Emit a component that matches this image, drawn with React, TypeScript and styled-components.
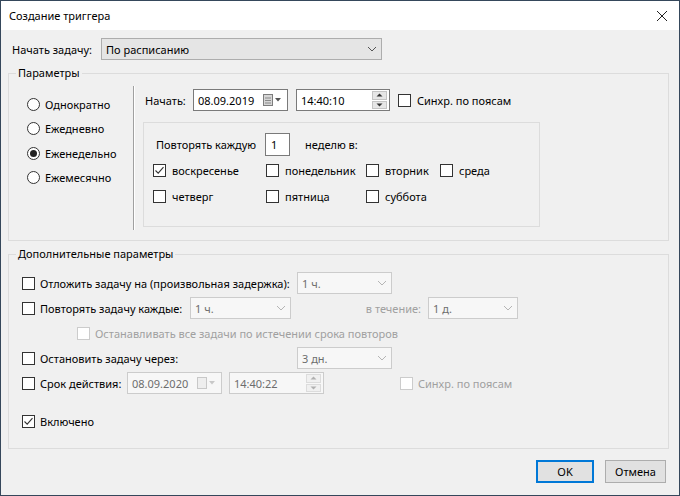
import React from "react";
import styled, { createGlobalStyle } from "styled-components";

const GlobalStyle = createGlobalStyle`
  html, body {
    margin: 0;
    padding: 0;
  }
  body {
    font-family: "Noto Sans", "Open Sans", sans-serif;
    font-size: 11px;
    color: #000;
  }
  * {
    box-sizing: border-box;
  }
`;

const Window = styled.div`
  width: 680px;
  height: 496px;
  border: 1px solid #35475b;
  background: #f0f0f0;
  display: flex;
  flex-direction: column;
`;

const TitleBar = styled.div`
  height: 29px;
  flex-shrink: 0;
  background: #fff;
  display: flex;
  align-items: center;
  justify-content: space-between;
  padding: 0 11px 0 8px;
`;

const Body = styled.div`
  padding: 0 10px 0 7px;
  display: flex;
  flex-direction: column;
`;

const Row = styled.div<{ $height?: number; $pad?: number; $top?: number }>`
  display: flex;
  align-items: center;
  height: ${(p) => p.$height ?? 22}px;
  padding-left: ${(p) => p.$pad ?? 0}px;
  margin-top: ${(p) => p.$top ?? 0}px;
  white-space: nowrap;
`;

const Text = styled.span<{ $width?: number; $gap?: number; $muted?: boolean; $right?: boolean }>`
  display: inline-block;
  width: ${(p) => (p.$width ? `${p.$width}px` : "auto")};
  margin-left: ${(p) => p.$gap ?? 0}px;
  color: ${(p) => (p.$muted ? "#a0a0a0" : "#000")};
  text-align: ${(p) => (p.$right ? "right" : "left")};
  padding-right: ${(p) => (p.$right ? 7 : 0)}px;
  flex-shrink: 0;
`;

const Group = styled.fieldset<{ $top: number }>`
  margin: ${(p) => p.$top}px 0 0 0;
  padding: 0;
  border: 1px solid #dcdcdc;
  min-width: 0;
`;

const Legend = styled.legend`
  margin-left: 7px;
  padding: 0 2px;
  line-height: 16px;
`;

const ParamsLayout = styled.div`
  display: flex;
  height: 159px;
`;

const RadioColumn = styled.div`
  width: 124px;
  padding: 15px 0 0 18px;
  display: flex;
  flex-direction: column;
  gap: 8.5px;
`;

const RadioRow = styled.div`
  display: flex;
  align-items: center;
  height: 16px;
  gap: 5px;
`;

const RadioCircle = styled.span<{ $selected?: boolean }>`
  width: 13px;
  height: 13px;
  border-radius: 50%;
  border: 1px solid #333;
  background: #fff;
  display: inline-flex;
  align-items: center;
  justify-content: center;
  &::after {
    content: "";
    display: ${(p) => (p.$selected ? "block" : "none")};
    width: 7px;
    height: 7px;
    border-radius: 50%;
    background: #222;
  }
`;

const Separator = styled.div`
  margin-top: 5px;
  width: 2px;
  height: 144px;
  border-left: 1px solid #a0a0a0;
  border-right: 1px solid #fff;
`;

const RightPane = styled.div`
  padding: 8px 0 0 10px;
  display: flex;
  flex-direction: column;
`;

const InnerPanel = styled.div`
  margin: 11px 0 0 -2px;
  width: 397px;
  height: 105px;
  border: 1px solid #dcdcdc;
  padding: 10px 0 0 9px;
`;

const NumberBox = styled.div`
  width: 25px;
  height: 23px;
  border: 1px solid #7a7a7a;
  background: #fff;
  padding-left: 5px;
  display: flex;
  align-items: center;
`;

const DaysGrid = styled.div`
  margin-top: 1px;
  display: grid;
  grid-template-columns: 113px 100px 74px auto;
  grid-auto-rows: 26px;
`;

const DayItem = styled.div`
  display: flex;
  align-items: center;
  gap: 6px;
`;

const ExtraLayout = styled.div`
  padding: 9px 0 15px 13px;
  display: flex;
  flex-direction: column;
  gap: 1px;
`;

const Box = styled.span<{ $disabled?: boolean }>`
  width: 13px;
  height: 13px;
  flex-shrink: 0;
  border: 1px solid ${(p) => (p.$disabled ? "#cccccc" : "#333")};
  background: #fff;
  display: inline-flex;
  align-items: center;
  justify-content: center;
`;

const Field = styled.div<{ $width: number; $disabled?: boolean; $gap?: number; $combo?: boolean }>`
  width: ${(p) => p.$width}px;
  height: 22px;
  margin-left: ${(p) => p.$gap ?? 0}px;
  flex-shrink: 0;
  display: flex;
  align-items: center;
  justify-content: space-between;
  padding: 0 3px 0 4px;
  border: 1px solid ${(p) => (p.$disabled ? "#cccccc" : p.$combo ? "#adadad" : "#7a7a7a")};
  background: ${(p) => (p.$disabled ? "#f7f7f7" : p.$combo ? "#e5e5e5" : "#fff")};
  color: ${(p) => (p.$disabled ? "#6d6d6d" : "#000")};
`;

const Spin = styled.div<{ $disabled?: boolean }>`
  width: 15px;
  height: 18px;
  display: flex;
  flex-direction: column;
  gap: 1px;
  margin-right: -1px;
  & > span {
    flex: 1;
    display: flex;
    align-items: center;
    justify-content: center;
    background: ${(p) => (p.$disabled ? "#f0f0f0" : "#e6e6e6")};
    border: 1px solid ${(p) => (p.$disabled ? "#dcdcdc" : "#c4c4c4")};
  }
`;

const ButtonRow = styled.div`
  display: flex;
  justify-content: flex-end;
  gap: 11px;
  margin: 11px 3px 0 0;
`;

const Button = styled.button<{ $width: number; $default?: boolean }>`
  width: ${(p) => p.$width}px;
  height: 23px;
  font: inherit;
  color: #000;
  background: #e1e1e1;
  border: 1px solid ${(p) => (p.$default ? "#0078d7" : "#adadad")};
  box-shadow: ${(p) => (p.$default ? "inset 0 0 0 1px #0078d7" : "none")};
  padding: 0;
`;

const Chevron = ({ color = "#555" }: { color?: string }) => (
  <svg width="12" height="8" viewBox="0 0 12 8">
    <path d="M2 2 L6 6 L10 2" fill="none" stroke={color} strokeWidth="1" />
  </svg>
);

const CalendarIcon = ({ disabled }: { disabled?: boolean }) => (
  <svg width="22" height="12" viewBox="0 0 22 12">
    <rect x="1.5" y="0.5" width="9" height="11" fill={disabled ? "#eeeeee" : "#d6d6d6"} stroke={disabled ? "#c8c8c8" : "#7d7d7d"} />
    {!disabled && (
      <>
        <line x1="3" y1="4" x2="9" y2="4" stroke="#8a8a8a" />
        <line x1="3" y1="6.5" x2="9" y2="6.5" stroke="#8a8a8a" />
        <line x1="3" y1="9" x2="9" y2="9" stroke="#8a8a8a" />
      </>
    )}
    <path d="M13 4 L19 4 L16 7.5 Z" fill={disabled ? "#c8c8c8" : "#555"} />
  </svg>
);

const Arrow = ({ up, disabled }: { up?: boolean; disabled?: boolean }) => (
  <svg width="7" height="4" viewBox="0 0 7 4">
    <path d={up ? "M0.5 3.5 L3.5 0.5 L6.5 3.5 Z" : "M0.5 0.5 L3.5 3.5 L6.5 0.5 Z"} fill={disabled ? "#b0b0b0" : "#333"} />
  </svg>
);

const Check = ({ checked, disabled }: { checked?: boolean; disabled?: boolean }) => (
  <Box $disabled={disabled}>
    {checked && (
      <svg width="11" height="11" viewBox="0 0 11 11">
        <path d="M1.5 5.5 L4.2 8.2 L9.5 2.2" fill="none" stroke="#333" strokeWidth="1.1" />
      </svg>
    )}
  </Box>
);

const Combo = ({ value, width, gap, disabled, main }: { value: string; width: number; gap?: number; disabled?: boolean; main?: boolean }) => (
  <Field $width={width} $gap={gap} $disabled={disabled} $combo={main}>
    <span>{value}</span>
    <Chevron color={disabled ? "#b5b5b5" : "#555"} />
  </Field>
);

const DateInput = ({ value, disabled, gap }: { value: string; disabled?: boolean; gap?: number }) => (
  <Field $width={95} $disabled={disabled} $gap={gap}>
    <span>{value}</span>
    <CalendarIcon disabled={disabled} />
  </Field>
);

const TimeInput = ({ value, disabled, gap, width = 94 }: { value: string; disabled?: boolean; gap?: number; width?: number }) => (
  <Field $width={width} $disabled={disabled} $gap={gap}>
    <span>{value}</span>
    <Spin $disabled={disabled}>
      <span>
        <Arrow up disabled={disabled} />
      </span>
      <span>
        <Arrow disabled={disabled} />
      </span>
    </Spin>
  </Field>
);

const days = [
  { name: "воскресенье", checked: true },
  { name: "понедельник" },
  { name: "вторник" },
  { name: "среда" },
  { name: "четверг" },
  { name: "пятница" },
  { name: "суббота" },
];

const schedules = ["Однократно", "Ежедневно", "Еженедельно", "Ежемесячно"];

export default function App() {
  return (
    <>
      <GlobalStyle />
      <Window>
        <TitleBar>
          <span>Создание триггера</span>
          <svg width="12" height="12" viewBox="0 0 12 12">
            <path d="M1 1 L11 11 M11 1 L1 11" stroke="#222" strokeWidth="1" />
          </svg>
        </TitleBar>
        <Body>
          <Row $top={8} $pad={4}>
            <Text $width={89}>Начать задачу:</Text>
            <Combo value="По расписанию" width={281} main />
          </Row>

          <Group $top={5}>
            <Legend>Параметры</Legend>
            <ParamsLayout>
              <RadioColumn>
                {schedules.map((s) => (
                  <RadioRow key={s}>
                    <RadioCircle $selected={s === "Еженедельно"} />
                    <span>{s}</span>
                  </RadioRow>
                ))}
              </RadioColumn>
              <Separator />
              <RightPane>
                <Row>
                  <Text $width={48}>Начать:</Text>
                  <DateInput value="08.09.2019" />
                  <TimeInput value="14:40:10" gap={8} />
                  <Text $gap={8} />
                  <Check />
                  <Text $gap={6}>Синхр. по поясам</Text>
                </Row>
                <InnerPanel>
                  <Row $height={23} $pad={3}>
                    <Text $width={109}>Повторять каждую</Text>
                    <NumberBox>1</NumberBox>
                    <Text $gap={15}>неделю в:</Text>
                  </Row>
                  <DaysGrid>
                    {days.map((d) => (
                      <DayItem key={d.name}>
                        <Check checked={d.checked} />
                        <span>{d.name}</span>
                      </DayItem>
                    ))}
                  </DaysGrid>
                </InnerPanel>
              </RightPane>
            </ParamsLayout>
          </Group>

          <Group $top={5}>
            <Legend>Дополнительные параметры</Legend>
            <ExtraLayout>
              <Row $height={24}>
                <Check />
                <Text $gap={5} $width={257}>Отложить задачу на (произвольная задержка):</Text>
                <Combo value="1 ч." width={95} disabled />
              </Row>
              <Row $height={24}>
                <Check />
                <Text $gap={5} $width={150}>Повторять задачу каждые:</Text>
                <Combo value="1 ч." width={101} disabled />
                <Text $width={137} $right $muted>в течение:</Text>
                <Combo value="1 д." width={90} disabled />
              </Row>
              <Row $height={24} $pad={55}>
                <Check disabled />
                <Text $gap={5} $muted>Останавливать все задачи по истечении срока повторов</Text>
              </Row>
              <Row $height={24}>
                <Check />
                <Text $gap={5} $width={257}>Остановить задачу через:</Text>
                <Combo value="3 дн." width={95} disabled />
              </Row>
              <Row $height={24}>
                <Check />
                <Text $gap={5} $width={87}>Срок действия:</Text>
                <DateInput value="08.09.2020" disabled />
                <TimeInput value="14:40:22" disabled gap={7} width={95} />
                <Text $gap={76} />
                <Check disabled />
                <Text $gap={5} $muted>Синхр. по поясам</Text>
              </Row>
              <Row $height={24} $top={13}>
                <Check checked />
                <Text $gap={5}>Включено</Text>
              </Row>
            </ExtraLayout>
          </Group>

          <ButtonRow>
            <Button $width={58} $default>
              OK
            </Button>
            <Button $width={61}>Отмена</Button>
          </ButtonRow>
        </Body>
      </Window>
    </>
  );
}
